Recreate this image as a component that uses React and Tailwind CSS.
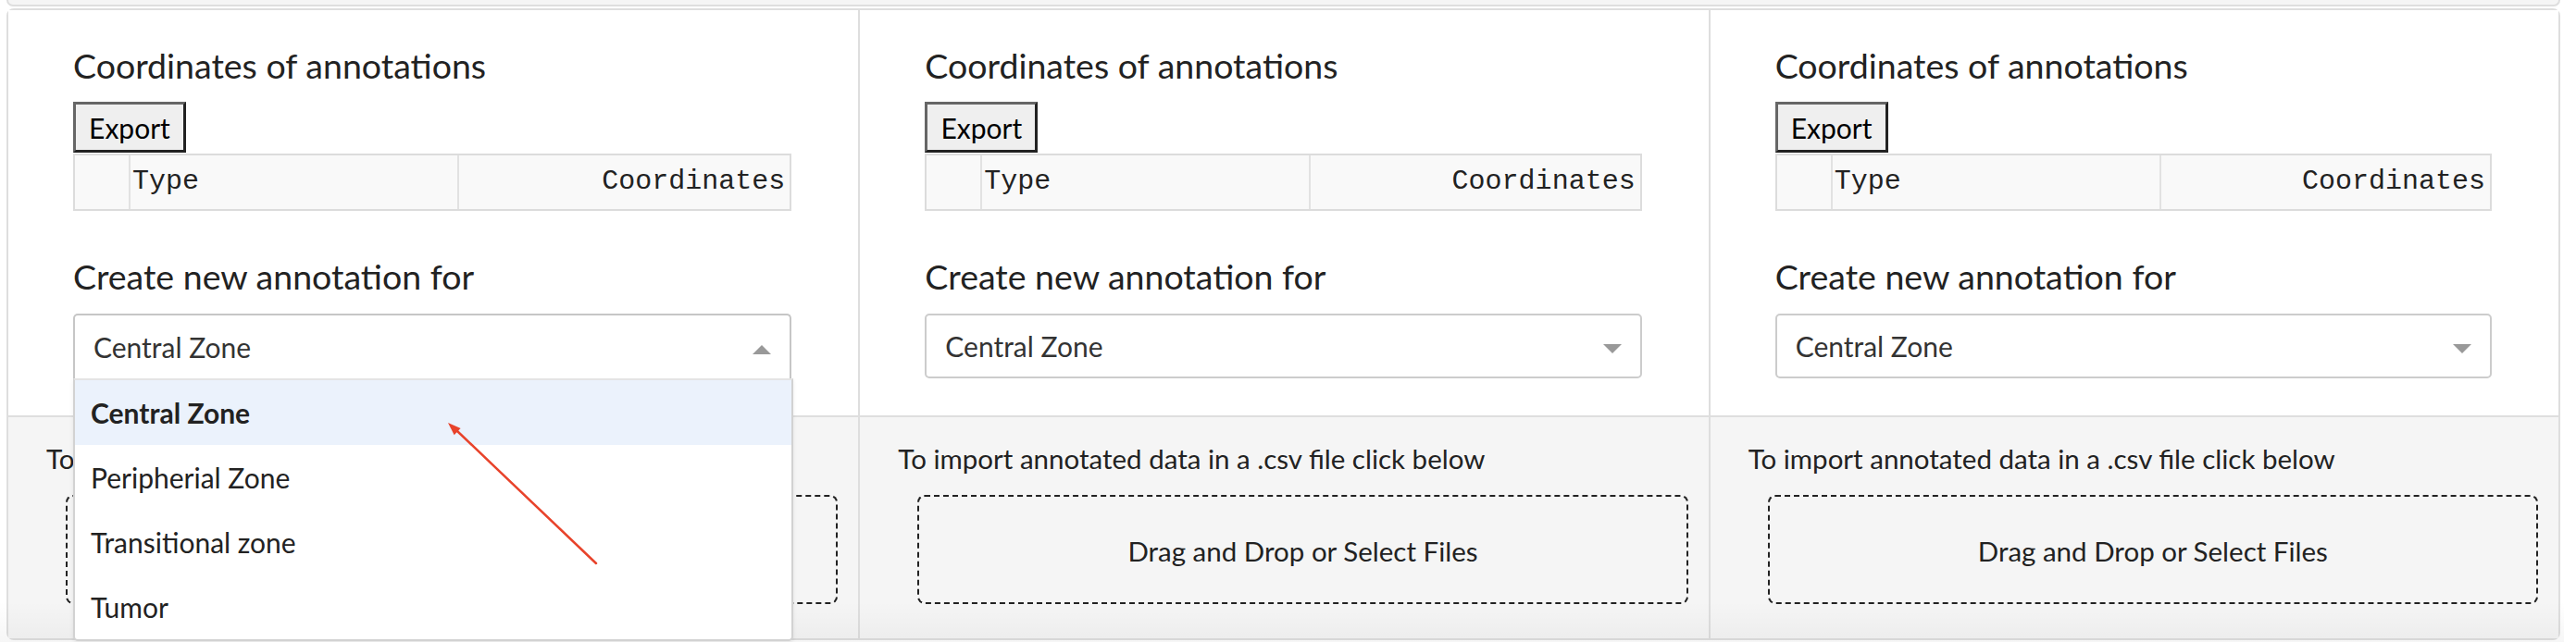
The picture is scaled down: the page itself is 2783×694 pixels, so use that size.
import React from 'react';

// ─── Data ─────────────────────────────────────────────────────────────────────

const ZONES = ['Central Zone', 'Peripherial Zone', 'Transitional zone', 'Tumor'];

// ─── Sub-components ───────────────────────────────────────────────────────────

function Caret({ up }) {
  return (
    <svg width="20" height="10" viewBox="0 0 20 10" className="shrink-0 translate-y-[3px]">
      <path d={up ? 'M0 10 L10 0 L20 10 Z' : 'M0 0 L20 0 L10 10 Z'} fill="#999999" />
    </svg>
  );
}

function AnnotationTable() {
  return (
    <div className="mt-px flex h-[62px] border-2 border-[#dcdcdc] bg-[#f9f9f9] font-['Liberation_Mono','Courier_New',monospace] text-[30px] leading-[57px] text-[#222]">
      <div className="w-[60px] border-r-2 border-[#e2e2e2]" />
      <div className="w-[355px] border-r-2 border-[#e2e2e2] pl-[2px]">Type</div>
      <div className="flex-1 pr-[5px] text-right">Coordinates</div>
    </div>
  );
}

function ZoneSelect({ open }) {
  return (
    <div className="relative mt-[19px]">
      <div
        className={
          open
            ? 'flex h-[70px] items-center justify-between rounded-t-[5px] border-2 border-b-0 border-[#c6c6c6] px-[20px]'
            : 'flex h-[70px] items-center justify-between rounded-[5px] border-2 border-[#cccccc] px-[20px]'
        }
      >
        <span className="text-[30px] leading-[36px] text-[#333]">Central Zone</span>
        <Caret up={open} />
      </div>

      {open && (
        <div className="absolute left-0 top-full z-10 w-[calc(100%+2px)] overflow-hidden rounded-b-[5px] border-2 border-[#d2d2d2] border-t-[#e4e4e4] bg-white shadow-[0_2px_4px_rgba(0,0,0,0.08)]">
          {ZONES.map((zone, i) => (
            <div
              key={zone}
              className={
                i === 0
                  ? 'h-[70px] bg-[#ebf2fc] pl-[17px] text-[30px] font-bold leading-[70px] text-[#222]'
                  : 'h-[70px] pl-[17px] text-[30px] leading-[70px] text-[#222]'
              }
            >
              {zone}
            </div>
          ))}
        </div>
      )}
    </div>
  );
}

function AnnotationColumn({ open, first }) {
  return (
    <div className={first ? 'flex flex-col' : 'flex flex-col border-l-2 border-[#dedede]'}>
      {/* upper: export + create */}
      <div className="h-[440px] border-b-2 border-[#dedede] bg-white pl-[70px] pr-[72px] pt-[39px]">
        <h5 className="text-[37.5px] leading-[42px] text-[#222]">Coordinates of annotations</h5>
        <button className="mt-[18px] block h-[55px] w-[122px] border-[3px] border-[#666] border-b-[#222] border-r-[#222] bg-[#efefef] text-[30px] leading-[36px] text-black">
          Export
        </button>
        <AnnotationTable />
        <h5 className="mt-[50px] text-[37.5px] leading-[42px] text-[#222]">Create new annotation for</h5>
        <ZoneSelect open={open} />
      </div>

      {/* lower: import */}
      <div className="flex-1 bg-[#f5f5f5] pt-[27px]">
        <p className="pl-[41px] text-[29.5px] leading-[36px] text-[#222]">
          To import annotated data in a .csv file click below
        </p>
        <div className="ml-[62px] mr-[22px] mt-[21px] flex h-[118px] items-center justify-center rounded-[8px] border-2 border-dashed border-[#222] pt-[4px] text-[29.5px] leading-[36px] text-[#222]">
          Drag and Drop or Select Files
        </div>
      </div>
    </div>
  );
}

// ─── Main Component ───────────────────────────────────────────────────────────

export default function App() {
  return (
    <div className="relative h-[694px] w-[2783px] overflow-hidden bg-white font-['Lato','Noto_Sans',sans-serif]">
      {/* tail of the card above */}
      <div className="ml-[7px] mr-[17px] h-[7px] rounded-b-[8px] border-x-2 border-b-2 border-[#dedede] bg-[#f5f5f5]" />

      <div className="ml-[7px] mr-[17px] mt-[2px] grid h-[683px] grid-cols-3 rounded-[8px] border-2 border-[#dedede]">
        <AnnotationColumn open first />
        <AnnotationColumn />
        <AnnotationColumn />
      </div>

      {/* faint fade at the bottom edge of the capture */}
      <div className="pointer-events-none absolute bottom-0 left-0 h-[44px] w-[2770px] bg-linear-to-b from-transparent to-[rgba(0,0,0,0.035)]" />

      {/* red pointer arrow */}
      <svg className="pointer-events-none absolute left-0 top-0 z-20" width="2783" height="694">
        <line x1="644" y1="609" x2="494" y2="466" stroke="#e8432b" strokeWidth="2.5" strokeLinecap="round" />
        <path d="M484 457 L497.6 463 L490.7 470.3 Z" fill="#e8432b" />
      </svg>
    </div>
  );
}
